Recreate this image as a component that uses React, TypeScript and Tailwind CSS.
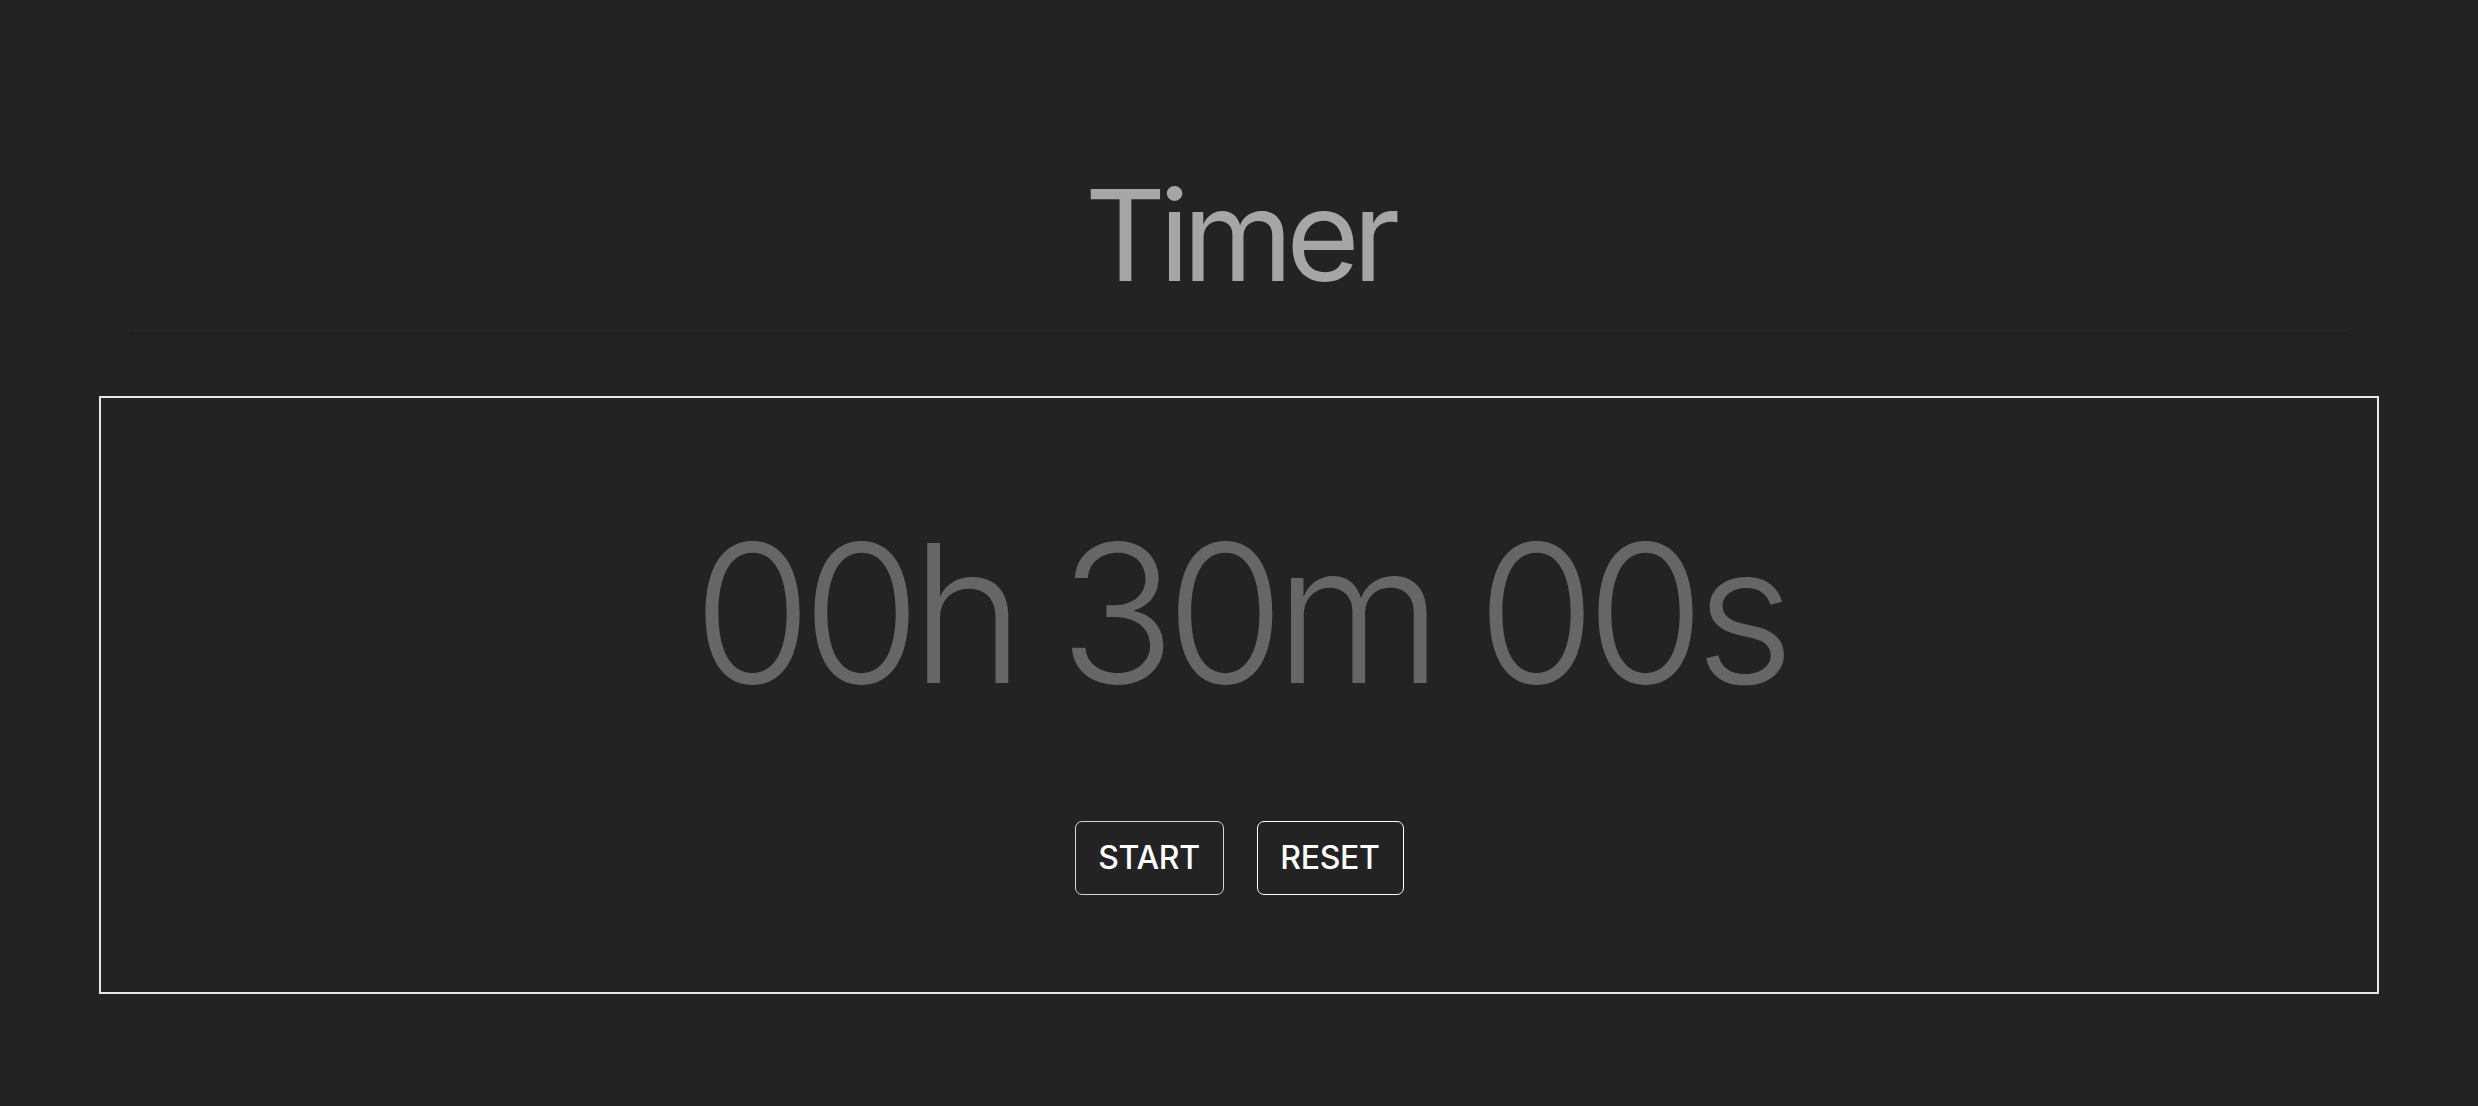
import { useEffect, useState } from "react"

const fmt = (n: number) => n.toString().padStart(2, "0")

export default function App() {
  const initial = 30 * 60
  const [left, setLeft] = useState<number>(initial)
  const [running, setRunning] = useState<boolean>(false)

  useEffect(() => {
    if (!running) return
    const id = setInterval(() => {
      setLeft((s) => (s > 0 ? s - 1 : 0))
    }, 1000)
    return () => clearInterval(id)
  }, [running])

  const h = Math.floor(left / 3600)
  const m = Math.floor((left % 3600) / 60)
  const s = left % 60

  return (
    <div className="min-h-screen w-full bg-[#232323] font-['Inter','Liberation_Sans',sans-serif]">
      <header className="mx-auto w-[2218px] pt-[172px] pb-[35px] border-b border-[#1c1c1c] shadow-[0_1px_0_#1f1f1f]">
        <h1 className="text-center text-[126px] leading-none font-normal tracking-[-0.055em] text-[#a6a6a6]">Timer</h1>
      </header>

      <main className="mx-auto mt-[62px] w-[92%] border-2 border-[#e5e7eb] pt-[119px] pb-[97px] flex flex-col items-center">
        <div className="text-[192px] leading-none font-light tracking-[-0.05em] text-[#666666]">
          {fmt(h)}h {fmt(m)}m {fmt(s)}s
        </div>
        <div className="mt-[112px] flex gap-[33px]">
          <button
            onClick={() => setRunning(!running)}
            className="h-[74px] w-[149px] rounded-[7px] border-[1.5px] border-[#d4d6da] text-[32px] font-medium tracking-[-0.01em] text-white"
          >
            {running ? "STOP" : "START"}
          </button>
          <button
            onClick={() => {
              setRunning(false)
              setLeft(initial)
            }}
            className="h-[74px] w-[147px] rounded-[7px] border-[1.5px] border-white text-[32px] font-medium tracking-[-0.01em] text-white"
          >
            RESET
          </button>
        </div>
      </main>
    </div>
  )
}
